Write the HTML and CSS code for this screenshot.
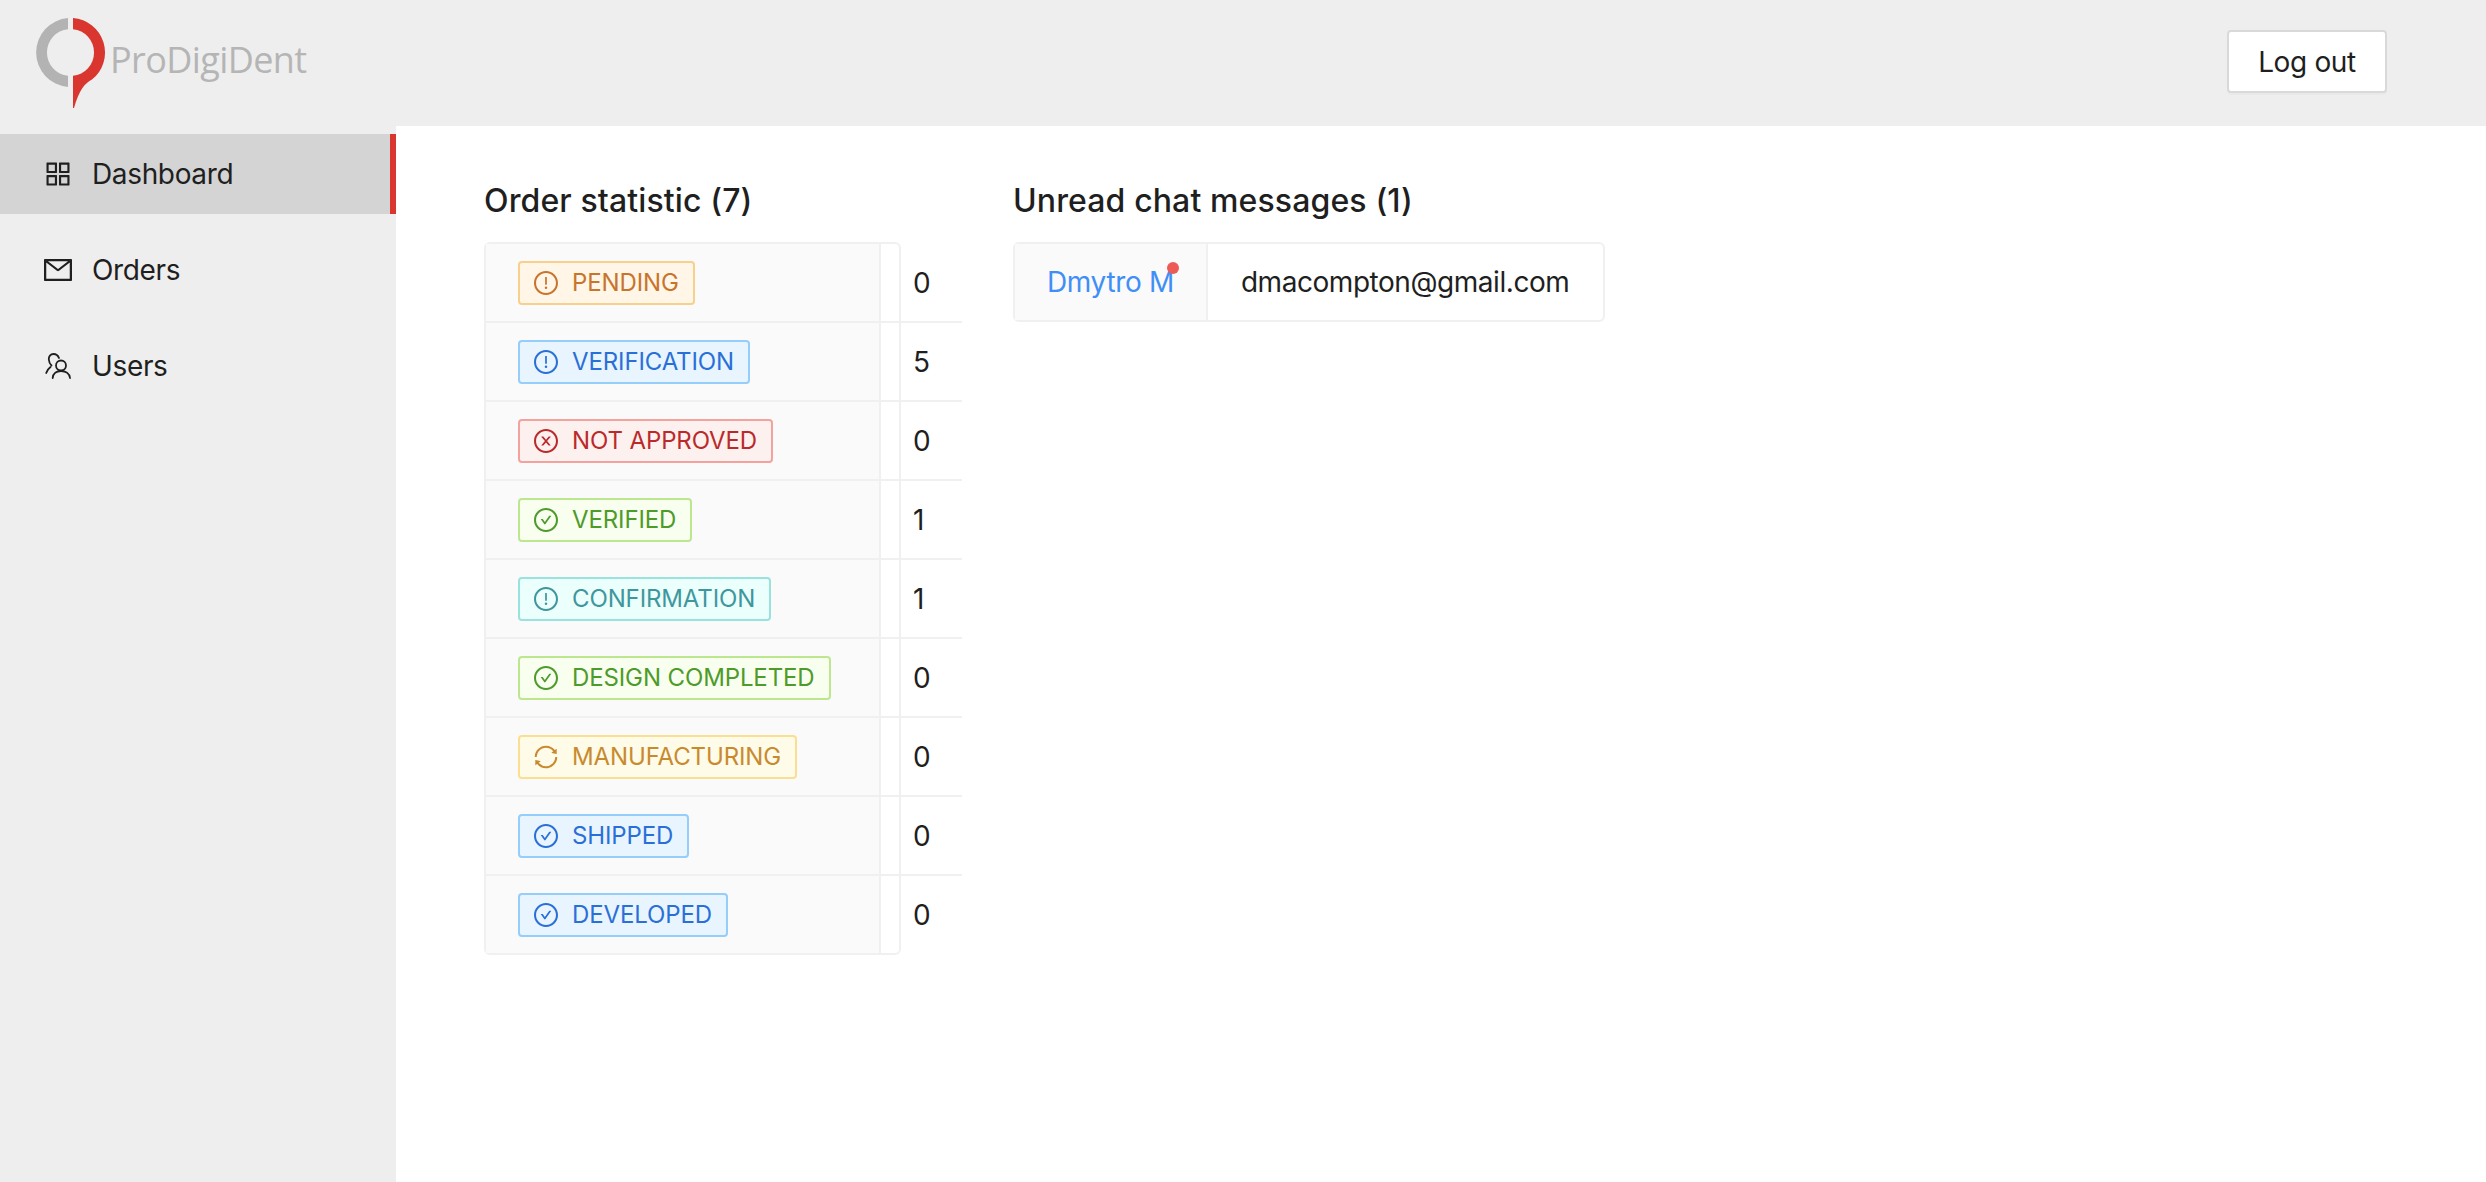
FILE: index.html
```html
<!DOCTYPE html>
<html lang="en">
<head>
<meta charset="utf-8">
<title>ProDigiDent</title>
<link rel="stylesheet" href="styles.css">
</head>
<body>
<svg class="defs" width="0" height="0" aria-hidden="true">
  <defs>
    <path id="ring" d="M512 64C264.6 64 64 264.6 64 512s200.6 448 448 448 448-200.6 448-448S759.4 64 512 64zm0 820c-205.4 0-372-166.6-372-372s166.6-372 372-372 372 166.6 372 372-166.6 372-372 372z"/>
    <symbol id="i-excl" viewBox="64 64 896 896"><use href="#ring"/><path d="M464 688a48 48 0 1096 0 48 48 0 10-96 0zm24-112h48c4.4 0 8-3.6 8-8V296c0-4.4-3.6-8-8-8h-48c-4.4 0-8 3.6-8 8v272c0 4.4 3.6 8 8 8z"/></symbol>
    <symbol id="i-check" viewBox="64 64 896 896"><use href="#ring"/><path d="M699 353h-46.9c-10.2 0-19.9 4.9-25.9 13.3L469 584.3l-71.2-98.8c-6-8.3-15.6-13.3-25.9-13.3H325c-6.5 0-10.3 7.4-6.5 12.7l124.6 172.8a31.8 31.8 0 0051.7 0l210.6-292c3.9-5.3.1-12.7-6.4-12.7z"/></symbol>
    <symbol id="i-close" viewBox="64 64 896 896"><use href="#ring"/><path d="M685.4 354.8c0-4.4-3.6-8-8-8l-66 .3L512 465.6l-99.3-118.4-66.1-.3c-4.4 0-8 3.5-8 8 0 1.9.7 3.7 1.9 5.2l130.1 155L340.5 670a8.32 8.32 0 00-1.9 5.2c0 4.4 3.6 8 8 8l66.1-.3L512 564.4l99.3 118.4 66 .3c4.4 0 8-3.5 8-8 0-1.9-.7-3.7-1.9-5.2L553.5 515l130.1-155c1.2-1.4 1.8-3.3 1.8-5.2z"/></symbol>
    <symbol id="i-sync" viewBox="64 64 896 896"><path d="M168 504.2c1-43.7 10-86.1 26.9-126 17.3-41 42.1-77.7 73.7-109.4S337 212.3 378 195c42.4-17.9 87.4-27 133.9-27s91.5 9.1 133.8 27A341.5 341.5 0 01755 268.8c9.9 9.9 19.2 20.4 27.8 31.4l-60.2 47a8 8 0 003 14.1l175.7 43c5 1.2 9.9-2.6 9.9-7.7l.8-180.9c0-6.7-7.7-10.5-12.9-6.3l-56.4 44.1C765.8 155.1 646.2 92 511.8 92 282.7 92 96.3 275.6 92 503.8a8 8 0 008 8.2h60c4.4 0 7.9-3.5 8-7.8zm756 7.8h-60c-4.4 0-7.9 3.5-8 7.8-1 43.7-10 86.1-26.9 126-17.3 41-42.1 77.8-73.7 109.4A342.45 342.45 0 01512.1 856a342.24 342.24 0 01-243.2-100.8c-9.9-9.9-19.2-20.4-27.8-31.4l60.2-47a8 8 0 00-3-14.1l-175.7-43c-5-1.2-9.9 2.6-9.9 7.7l-.7 181c0 6.7 7.7 10.5 12.9 6.3l56.4-44.1C258.2 868.9 377.8 932 512.2 932c229.2 0 415.5-183.7 419.8-411.8a8 8 0 00-8-8.2z"/></symbol>
  </defs>
</svg>

<header class="topbar">
  <a class="logo" href="#">
    <svg class="logo-mark" viewBox="0 0 70 92" aria-hidden="true">
      <path class="logo-grey" d="M32 .1A34.5 34.5 0 0 0 32 68.9V57.87A23.5 23.5 0 0 1 32 11.13Z"/>
      <path class="logo-red" d="M37 .1A34.5 34.5 0 0 1 56 61.5C49 65 43 72 38 90L37 90V57.87A23.5 23.5 0 0 0 37 11.13Z"/>
    </svg>
    <span class="logo-text">ProDigiDent</span>
  </a>
  <button class="logout" type="button">Log out</button>
</header>

<div class="shell">
  <nav class="sidebar">
    <a class="nav-item active" href="#">
      <svg class="nav-icon" viewBox="64 64 896 896" aria-hidden="true"><path d="M464 144H160c-8.800 0-16 7.200-16 16v304c0 8.800 7.200 16 16 16h304c8.800 0 16-7.200 16-16V160c0-8.800-7.200-16-16-16zm-52 268H212V212h200v200zm452-268H560c-8.800 0-16 7.200-16 16v304c0 8.800 7.200 16 16 16h304c8.800 0 16-7.200 16-16V160c0-8.800-7.200-16-16-16zm-52 268H612V212h200v200zM464 544H160c-8.800 0-16 7.200-16 16v304c0 8.800 7.200 16 16 16h304c8.800 0 16-7.200 16-16V560c0-8.800-7.200-16-16-16zm-52 268H212V612h200v200zm452-268H560c-8.800 0-16 7.200-16 16v304c0 8.800 7.200 16 16 16h304c8.800 0 16-7.200 16-16V560c0-8.800-7.200-16-16-16zm-52 268H612V612h200v200z"/></svg>
      <span>Dashboard</span>
    </a>
    <a class="nav-item" href="#">
      <svg class="nav-icon" viewBox="64 64 896 896" aria-hidden="true"><path d="M928 160H96c-17.700 0-32 14.300-32 32v640c0 17.700 14.300 32 32 32h832c17.700 0 32-14.300 32-32V192c0-17.700-14.300-32-32-32zm-40 110.800V792H136V270.800l-27.600-21.500 39.300-50.500 42.800 33.300h643.100l42.800-33.300 39.300 50.500-27.700 21.500zM833.600 232L512 482 190.400 232l-42.800-33.300-39.300 50.500 27.600 21.500 341.600 265.600a55.990 55.990 0 0068.700 0L888 270.800l27.600-21.500-39.300-50.500-42.700 33.200z"/></svg>
      <span>Orders</span>
    </a>
    <a class="nav-item" href="#">
      <svg class="nav-icon nav-icon-line" viewBox="0 0 28 28" aria-hidden="true">
        <path d="M15 6C14 3.500 12 2 9.500 2C6.500 2 4.500 4.500 4.800 7.500C5 10 6 12 7.500 13.500"/>
        <path d="M6.500 15C4.500 16.500 3 18.500 2.200 21"/>
        <circle cx="17" cy="13.500" r="5"/>
        <path d="M8.700 26C9 21.500 12.500 19 17 19C21.500 19 25.500 21.500 26 26"/>
      </svg>
      <span>Users</span>
    </a>
  </nav>

  <main class="content">
    <section class="stats">
      <h2 class="title">Order statistic (7)</h2>
      <div class="box">
        <table class="stat-table">
          <tbody>
            <tr><th><span class="tag orange"><svg class="tag-icon"><use href="#i-excl"/></svg>PENDING</span></th><td>0</td></tr>
            <tr><th><span class="tag blue"><svg class="tag-icon"><use href="#i-excl"/></svg>VERIFICATION</span></th><td>5</td></tr>
            <tr><th><span class="tag red"><svg class="tag-icon"><use href="#i-close"/></svg>NOT APPROVED</span></th><td>0</td></tr>
            <tr><th><span class="tag green"><svg class="tag-icon"><use href="#i-check"/></svg>VERIFIED</span></th><td>1</td></tr>
            <tr><th><span class="tag cyan"><svg class="tag-icon"><use href="#i-excl"/></svg>CONFIRMATION</span></th><td>1</td></tr>
            <tr><th><span class="tag green"><svg class="tag-icon"><use href="#i-check"/></svg>DESIGN COMPLETED</span></th><td>0</td></tr>
            <tr><th><span class="tag gold"><svg class="tag-icon"><use href="#i-sync"/></svg>MANUFACTURING</span></th><td>0</td></tr>
            <tr><th><span class="tag blue"><svg class="tag-icon"><use href="#i-check"/></svg>SHIPPED</span></th><td>0</td></tr>
            <tr><th><span class="tag blue"><svg class="tag-icon"><use href="#i-check"/></svg>DEVELOPED</span></th><td>0</td></tr>
          </tbody>
        </table>
      </div>
    </section>

    <section class="chats">
      <h2 class="title">Unread chat messages (1)</h2>
      <div class="box chat-box">
        <table class="chat-table">
          <tbody>
            <tr>
              <th><a class="chat-link" href="#">Dmytro M<span class="dot"></span></a></th>
              <td>dmacompton@gmail.com</td>
            </tr>
          </tbody>
        </table>
      </div>
    </section>
  </main>
</div>
</body>
</html>
```
FILE: styles.css
```css
* { box-sizing: border-box; }

html, body { height: 100%; }

body {
  margin: 0;
  background: #fff;
  color: #1f1f1f;
  font-family: Inter, "Liberation Sans", sans-serif;
  font-size: 28px;
  letter-spacing: -0.35px;
  display: flex;
  flex-direction: column;
  overflow: hidden;
}

a { text-decoration: none; color: inherit; }

.defs { position: absolute; }

/* Header */
.topbar {
  flex: none;
  height: 126px;
  background: #eee;
  display: flex;
  align-items: flex-start;
  justify-content: space-between;
  padding: 0 99px 0 36px;
}

.logo {
  display: flex;
  align-items: flex-start;
  padding-top: 18px;
}

.logo-mark {
  width: 70px;
  height: 92px;
  flex: none;
}

.logo-grey { fill: #b3b3b3; }
.logo-red { fill: #d9362f; }

.logo-text {
  margin: 17px 0 0 4px;
  font-family: "Open Sans", sans-serif;
  font-size: 36px;
  line-height: 50px;
  letter-spacing: -0.6px;
  color: #b5b5b5;
}

.logout {
  margin-top: 30px;
  width: 160px;
  height: 63px;
  background: #fff;
  border: 2px solid #d9d9d9;
  border-radius: 4px;
  box-shadow: 0 2px 0 rgba(0, 0, 0, 0.02);
  color: #1f1f1f;
  font: inherit;
  letter-spacing: inherit;
}

/* Layout */
.shell {
  flex: 1;
  display: flex;
  min-height: 0;
}

.sidebar {
  flex: none;
  width: 396px;
  background: #eee;
  padding-top: 8px;
  display: flex;
  flex-direction: column;
  gap: 16px;
}

.nav-item {
  height: 80px;
  display: flex;
  align-items: center;
  gap: 20px;
  padding-left: 44px;
  line-height: 1;
}

.nav-item.active {
  background: #d4d4d4;
  border-right: 6px solid #d9362f;
}

.nav-icon {
  width: 28px;
  height: 28px;
  flex: none;
  fill: #1f1f1f;
}

.nav-icon-line {
  fill: none;
  stroke: #1f1f1f;
  stroke-width: 1.8;
  stroke-linecap: round;
}

.content {
  flex: 1;
  display: flex;
  align-items: flex-start;
  gap: 112px;
  padding: 52px 0 0 88px;
}

.title {
  margin: 0 0 18px;
  font-size: 32px;
  line-height: 46px;
  font-weight: 500;
  letter-spacing: 0.12px;
  color: #1f1f1f;
}

/* Tables */
.box {
  width: 417px;
  border: 2px solid #f0f0f0;
  border-radius: 6px;
}

table {
  border-collapse: separate;
  border-spacing: 0;
}

.stat-table { width: 476px; table-layout: fixed; }

.stat-table th {
  width: 395px;
  height: 79px;
  padding: 0 32px;
  background: #fafafa;
  border-right: 2px solid #f0f0f0;
  border-bottom: 2px solid #f0f0f0;
  text-align: left;
  font-weight: 400;
}

.stat-table td {
  width: 81px;
  height: 79px;
  padding: 0 32px;
  border-bottom: 2px solid #f0f0f0;
}

.stat-table tr:last-child th,
.stat-table tr:last-child td {
  height: 77px;
  border-bottom: 0;
}

.tag {
  display: inline-flex;
  align-items: center;
  height: 44px;
  padding: 1px 14px 0;
  border: 2px solid;
  border-radius: 4px;
  font-size: 24px;
  line-height: 40px;
  letter-spacing: -0.12px;
  vertical-align: middle;
}

.tag-icon {
  width: 24px;
  height: 24px;
  margin-right: 14px;
  fill: currentColor;
  flex: none;
}

.orange { color: #c8742c; background: #fff6e8; border-color: #f7d08c; }
.blue { color: #2a6fd8; background: #e8f5fe; border-color: #95cdfb; }
.red { color: #bb2a2a; background: #fdf1f0; border-color: #f3a29d; }
.green { color: #4e9a2a; background: #f8ffef; border-color: #bde78f; }
.cyan { color: #3f979e; background: #ebfffc; border-color: #98e3de; }
.gold { color: #c98a2e; background: #fffbe9; border-color: #fbdf91; }

.chat-box { width: auto; }

.chat-table th {
  height: 76px;
  padding: 0 32px;
  background: #fafafa;
  border-right: 2px solid #f0f0f0;
  font-weight: 400;
}

.chat-table td {
  height: 76px;
  padding: 0 34px 0 33px;
  letter-spacing: -0.45px;
}

.chat-link {
  position: relative;
  color: #3f8ff7;
}

.dot {
  position: absolute;
  top: -3px;
  right: -5px;
  width: 12px;
  height: 12px;
  border-radius: 50%;
  background: #ec5b56;
}
```
